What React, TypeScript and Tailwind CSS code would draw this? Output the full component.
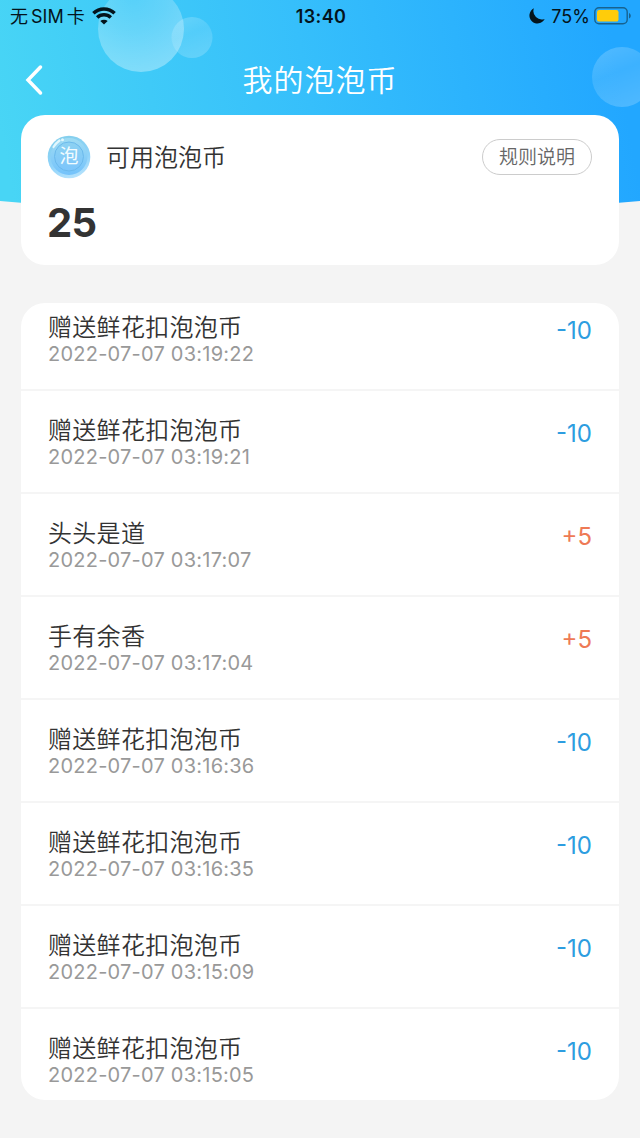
type CoinRecord = {
  id: number
  title: string
  createdAt: string
  amount: number
}

const records: CoinRecord[] = [
  { id: 1, title: "赠送鲜花扣泡泡币", createdAt: "2022-07-07 03:19:22", amount: -10 },
  { id: 2, title: "赠送鲜花扣泡泡币", createdAt: "2022-07-07 03:19:21", amount: -10 },
  { id: 3, title: "头头是道", createdAt: "2022-07-07 03:17:07", amount: 5 },
  { id: 4, title: "手有余香", createdAt: "2022-07-07 03:17:04", amount: 5 },
  { id: 5, title: "赠送鲜花扣泡泡币", createdAt: "2022-07-07 03:16:36", amount: -10 },
  { id: 6, title: "赠送鲜花扣泡泡币", createdAt: "2022-07-07 03:16:35", amount: -10 },
  { id: 7, title: "赠送鲜花扣泡泡币", createdAt: "2022-07-07 03:15:09", amount: -10 },
  { id: 8, title: "赠送鲜花扣泡泡币", createdAt: "2022-07-07 03:15:05", amount: -10 },
]

function HeaderBackground() {
  return (
    <svg className="absolute inset-x-0 top-0" width="640" height="220" viewBox="0 0 640 220" aria-hidden="true">
      <defs>
        <linearGradient id="sky" gradientUnits="userSpaceOnUse" x1="0" y1="130" x2="610" y2="20">
          <stop offset="0" stopColor="#48d5f5" />
          <stop offset="0.5" stopColor="#36bffb" />
          <stop offset="1" stopColor="#22a7ff" />
        </linearGradient>
        <radialGradient id="bubble" cx="0.4" cy="0.1" r="0.9">
          <stop offset="0" stopColor="#fff" stopOpacity="0.12" />
          <stop offset="0.45" stopColor="#fff" stopOpacity="0.2" />
          <stop offset="1" stopColor="#fff" stopOpacity="0.34" />
        </radialGradient>
        <linearGradient id="bubbleFaint" x1="0.3" y1="0" x2="0.7" y2="1">
          <stop offset="0" stopColor="#fff" stopOpacity="0.2" />
          <stop offset="0.4" stopColor="#fff" stopOpacity="0.12" />
          <stop offset="1" stopColor="#fff" stopOpacity="0.2" />
        </linearGradient>
      </defs>
      <path d="M0 0H640V201Q320 231 0 201Z" fill="url(#sky)" />
      <circle cx="141" cy="29" r="43" fill="url(#bubble)" />
      <circle cx="192" cy="37.5" r="20.5" fill="url(#bubbleFaint)" />
      <circle cx="622" cy="77" r="30" fill="url(#bubbleFaint)" />
    </svg>
  )
}

function WifiIcon() {
  return (
    <svg width="24" height="18" viewBox="0 0 24 18" fill="none" stroke="#04141c" strokeWidth="3.5">
      <path d="M1.4 6.2a15.2 15.2 0 0 1 21.2 0" />
      <path d="M5.2 10.6a9.8 9.8 0 0 1 13.6 0" />
      <path d="M12 17.6l-3.7-3.5a5.4 5.4 0 0 1 7.4 0z" fill="#04141c" stroke="none" />
    </svg>
  )
}

function BatteryIcon() {
  return (
    <svg width="38" height="18" viewBox="0 0 38 18">
      <rect x="0.8" y="0.8" width="32.4" height="16" rx="4.2" fill="none" stroke="#17628f" strokeWidth="1.4" />
      <rect x="3" y="3" width="21.5" height="11.6" rx="2.2" fill="#ffcc0a" />
      <path d="M35 6v5.6c2.4-1 2.4-4.6 0-5.6z" fill="#17628f" />
    </svg>
  )
}

function StatusBar() {
  return (
    <div className="grid h-8 grid-cols-3 items-center pr-2 pl-2.5 text-[18px] text-[#04141c]">
      <div className="flex items-center">
        <span>无</span>
        <span className="ml-[3px]">SIM</span>
        <span className="ml-[3px]">卡</span>
        <span className="ml-[7px]">
          <WifiIcon />
        </span>
      </div>
      <div className="text-center font-semibold tracking-[0.4px]">13:40</div>
      <div className="flex items-center justify-end">
        <svg width="16" height="16" viewBox="0 0 15 15" className="mr-1.5">
          <path d="M4.6 0.3A7.5 7.5 0 1 0 14.7 10.2A7.8 7.8 0 0 1 4.6 0.3Z" fill="#04141c" />
        </svg>
        <span>75%</span>
        <span className="ml-1">
          <BatteryIcon />
        </span>
      </div>
    </div>
  )
}

function CoinIcon() {
  return (
    <svg width="44" height="44" viewBox="0 0 44 44">
      <defs>
        <linearGradient id="coin" x1="0.3" y1="0" x2="0.6" y2="1">
          <stop offset="0" stopColor="#84cfec" />
          <stop offset="0.6" stopColor="#8fd3fa" />
          <stop offset="1" stopColor="#b5e2fc" />
        </linearGradient>
        <linearGradient id="coinRing" x1="0" y1="0" x2="0" y2="1">
          <stop offset="0" stopColor="#a0dcf3" />
          <stop offset="1" stopColor="#73c2fb" />
        </linearGradient>
        <linearGradient id="coinFace" x1="0" y1="0" x2="0" y2="1">
          <stop offset="0" stopColor="#8dd2f2" />
          <stop offset="1" stopColor="#7cc5fb" />
        </linearGradient>
      </defs>
      <circle cx="22" cy="22" r="21.3" fill="url(#coin)" />
      <circle cx="22" cy="21.5" r="18.5" fill="url(#coinRing)" />
      <circle cx="22" cy="21.5" r="14.5" fill="url(#coinFace)" stroke="#68b7ea" strokeWidth="0.9" />
      <path d="M6.5 12Q9 8 12.5 5.5" stroke="#e2f7fd" strokeWidth="2.2" strokeLinecap="round" fill="none" />
      <circle cx="15.5" cy="4.8" r="1.5" fill="#e2f7fd" />
      <text x="22" y="28" textAnchor="middle" fontSize="19" fill="#f2fcff">
        泡
      </text>
    </svg>
  )
}

function BalanceCard({ balance }: { balance: number }) {
  return (
    <section className="mx-[21px] h-[150.5px] rounded-[24px] bg-white px-[27px] pt-[20.5px]">
      <div className="flex h-11 items-center">
        <span className="-ml-px">
          <CoinIcon />
        </span>
        <h2 className="mt-0.5 ml-[15px] text-[24px] leading-none font-[350] text-[#333]">可用泡泡币</h2>
        <button
          type="button"
          className="ml-auto flex h-9 w-[110px] items-center justify-center rounded-full border-[1.5px] border-[#ccc] pt-0.5 text-[19px] font-[350] text-[#666]"
        >
          规则说明
        </button>
      </div>
      <div className="mt-6 -ml-px text-[40px] leading-10 font-bold tracking-[-0.8px] text-[#333]">{balance}</div>
    </section>
  )
}

function RecordRow({ record }: { record: CoinRecord }) {
  return (
    <li className="flex h-[103px] shrink-0 items-start justify-between border-b-2 border-[#f5f5f5] px-[27px]">
      <div className="pt-[27px]">
        <div className="text-[24px] leading-[26px] font-[350] tracking-[0.3px] text-[#333]">{record.title}</div>
        <div className="text-[20px] leading-[26px] tracking-[0.23px] text-[#999]">{record.createdAt}</div>
      </div>
      <div className={`pt-[27px] text-[24px] leading-8 ${record.amount > 0 ? "text-[#ee7a55]" : "text-[#2d9de0]"}`}>
        {record.amount > 0 ? `+${record.amount}` : record.amount}
      </div>
    </li>
  )
}

export default function App() {
  return (
    <div className="relative h-[1138px] w-[640px] overflow-hidden bg-[#f4f4f4] font-['Inter','Noto_Sans_CJK_SC',sans-serif]">
      <HeaderBackground />
      <div className="relative flex flex-col">
        <StatusBar />
        <header className="grid h-[82.5px] grid-cols-[1fr_auto_1fr] items-center pt-[14px] text-white">
          <button type="button" aria-label="返回" className="ml-6 w-fit">
            <svg width="20" height="32" viewBox="0 0 20 32" fill="none" stroke="currentColor" strokeWidth="3.5" strokeLinecap="round">
              <path d="M16.5 3L4 16L16.5 29" />
            </svg>
          </button>
          <h1 className="text-[30px] leading-none font-[350] tracking-[1px]">我的泡泡币</h1>
        </header>
        <BalanceCard balance={25} />
        <ul className="mx-[21px] mt-[38px] flex h-[797px] flex-col overflow-hidden rounded-[24px] bg-white">
          {/* the list is scrolled a little past its first row */}
          <li className="-mt-[15px]" aria-hidden="true" />
          {records.map((record) => (
            <RecordRow key={record.id} record={record} />
          ))}
        </ul>
      </div>
    </div>
  )
}
